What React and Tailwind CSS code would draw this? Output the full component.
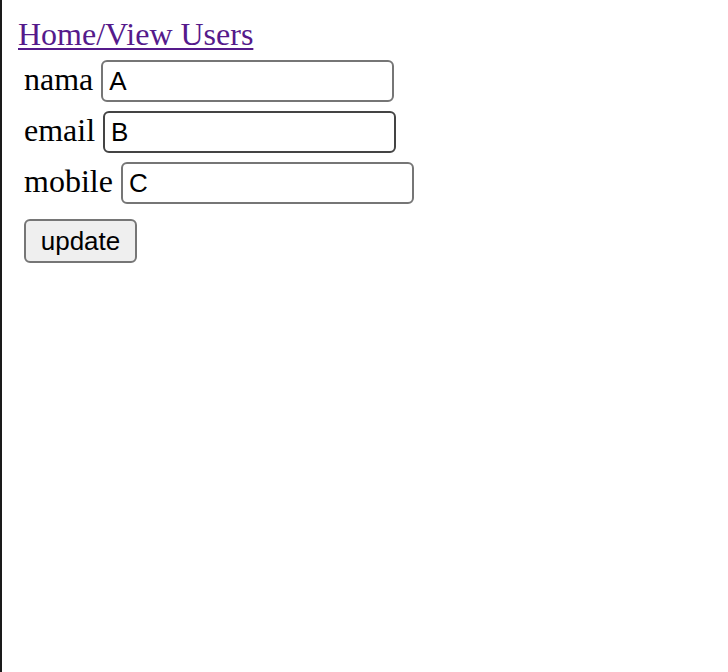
import React from "react";

export default function App() {
  const inputCls =
    "box-border w-[293px] h-[42px] rounded-[6px] border-2 bg-white px-[6px] text-[26px] text-black font-['Liberation_Sans',Arial,sans-serif] outline-none";
  return (
    <div className="min-h-[672px] border-l-2 border-[#1a1a1a] bg-white pl-[16px] pt-[16px] font-['Liberation_Serif','Times_New_Roman',serif] text-[32px] text-black">
      <div className="leading-[36px]">
        <a href="#" className="text-[#551a8b] underline decoration-[2px] underline-offset-[3px]">
          Home/View Users
        </a>
      </div>
      <div className="mt-[8px] flex flex-col gap-[9px] pl-[6px]">
        <div className="flex items-baseline gap-[8px] leading-[36px]">
          <span>nama</span>
          <input className={inputCls + " border-[#767676]"} defaultValue="A" />
        </div>
        <div className="flex items-baseline gap-[8px] leading-[36px]">
          <span>email</span>
          <input className={inputCls + " border-[#444444]"} defaultValue="B" />
        </div>
        <div className="flex items-baseline gap-[8px] leading-[36px]">
          <span>mobile</span>
          <input className={inputCls + " border-[#767676]"} defaultValue="C" />
        </div>
        <div className="mt-[2px]">
          <button className="box-border w-[113px] h-[44px] rounded-[6px] border-2 border-[#767676] bg-[#efefef] text-[26px] leading-none text-black font-['Liberation_Sans',Arial,sans-serif]">
            update
          </button>
        </div>
      </div>
    </div>
  );
}
